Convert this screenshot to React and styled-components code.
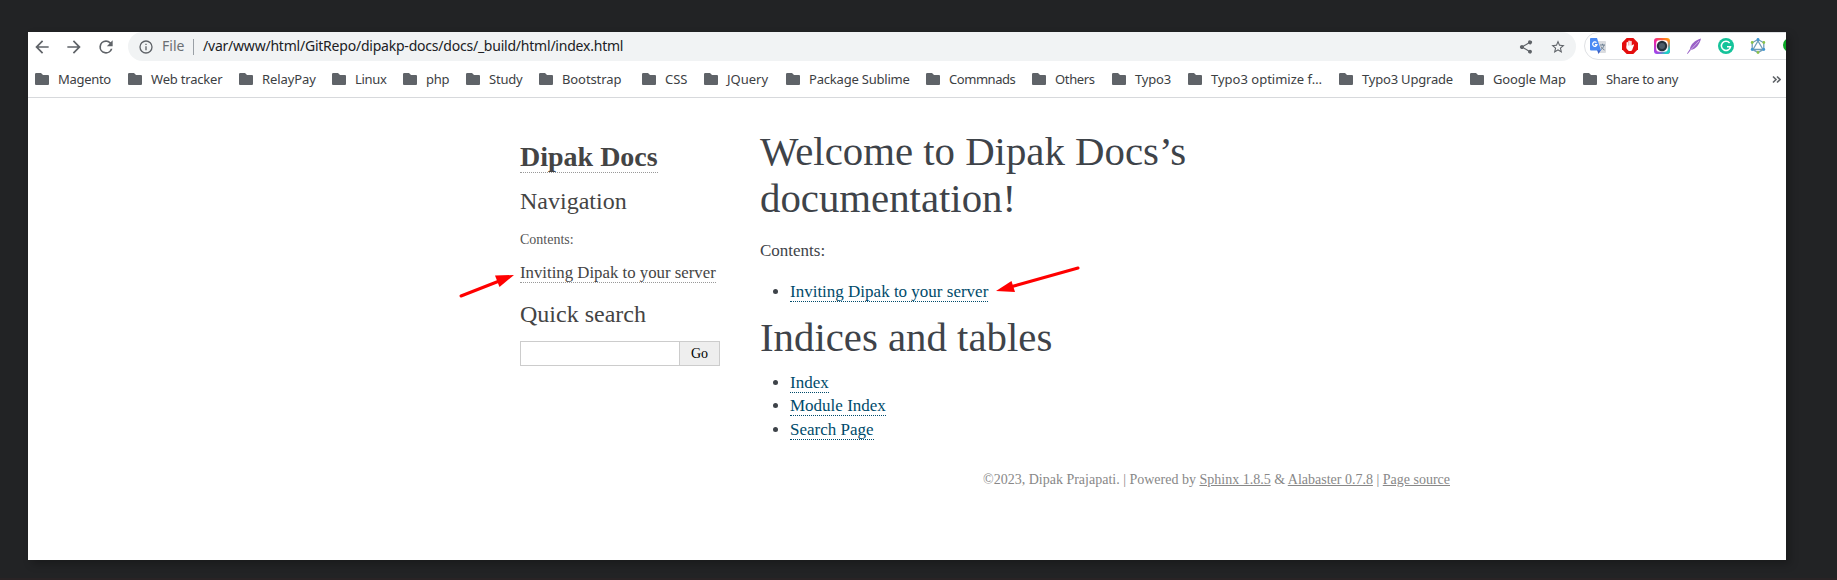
import React from 'react';
import styled, { createGlobalStyle } from 'styled-components';

const Global = createGlobalStyle`
  * { box-sizing: border-box; }
  html, body { margin: 0; background: #222325; }
  body { font-family: "Liberation Serif", serif; overflow: hidden; }
`;

const Desktop = styled.div`
  height: 580px;
  padding: 32px 51px 20px 28px;
  background: #222325;
  border-bottom: 2px solid #292325;
`;
const Window = styled.div`
  width: 1758px;
  height: 528px;
  background: #fff;
  overflow: hidden;
  box-shadow: 4px 4px 8px rgba(0, 0, 0, 0.25);
`;
const Chrome = styled.header`
  height: 66px;
  border-bottom: 1px solid #d7d9dc;
  font-family: "Noto Sans", sans-serif;
`;
const Toolbar = styled.div`
  display: flex;
  height: 29px;
  align-items: center;
`;
const NavButtons = styled.div`
  display: flex;
  flex: none;
  gap: 12px;
  width: 100px;
  padding-left: 4px;
`;
const Icon = styled.svg`
  display: block;
  flex: none;
  width: ${(p) => p.$size}px;
  height: ${(p) => p.$size}px;
  fill: ${(p) => p.$color || '#5f6368'};
`;
const AddressBar = styled.div`
  display: flex;
  flex: none;
  align-items: center;
  width: 1448px;
  height: 29px;
  padding: 0 10px 0 10px;
  border-radius: 14.5px;
  background: #f1f3f4;
  font-size: 14px;
  line-height: 18px;
  color: #202124;
`;
const Scheme = styled.span`
  width: 31px;
  margin: -1px 0 0 8px;
  color: #6b6f73;
`;
const Divider = styled.span`
  width: 1px;
  height: 16px;
  margin-right: 9px;
  background: #9aa0a6;
`;
const Path = styled.span`
  flex: 1;
  margin-top: -1px;
  letter-spacing: ${(p) => p.$spacing}px;
  white-space: nowrap;
`;
const AddressActions = styled.div`
  display: flex;
  gap: 16px;
`;
const Extensions = styled.div`
  display: flex;
  flex: none;
  align-items: center;
  gap: 16px;
  width: 250px;
  height: 28px;
  margin: 0 0 1px 8px;
  padding-left: 5px;
  border: 1px solid #dfe1e4;
  border-radius: 14px;
`;
const BookmarkBar = styled.nav`
  display: flex;
  height: 36px;
  padding: 0 5px 0 7px;
  align-items: center;
  font-size: 13px;
  color: #3c4043;
`;
const Bookmark = styled.div`
  display: flex;
  flex: none;
  align-items: center;
  gap: 9px;
  width: ${(p) => p.$width}px;
  letter-spacing: ${(p) => p.$spacing}px;
  white-space: nowrap;
`;
const Overflow = styled.span`
  margin-left: auto;
`;

const Page = styled.div`
  width: 940px;
  margin-left: 482px;
`;
const Document = styled.div`
  display: flex;
  padding-top: 30px;
`;
const Sidebar = styled.aside`
  width: 220px;
  padding: 13px 10px 0;
  color: #555;
  font-size: 14px;
  line-height: 20px;
`;
const Logo = styled.h1`
  margin: 0;
  font-size: 28px;
  line-height: 32px;
  color: #444;
`;
const SideLink = styled.a`
  border-bottom: 1px dotted #999;
  color: #444;
`;
const SideHeading = styled.h3`
  margin: ${(p) => p.$top}px 0 0;
  font-size: 24px;
  font-weight: 400;
  line-height: 28px;
  color: #444;
`;
const SideCaption = styled.p`
  margin: 15px 0 0;
`;
const SideItem = styled.div`
  margin-top: 11px;
  font-size: 16.8px;
  line-height: 24px;
`;
const Search = styled.div`
  display: flex;
  width: 200px;
  height: 25px;
  margin-top: 13px;
`;
const SearchInput = styled.input`
  width: 160px;
  border: 1px solid #ccc;
  background: #fff;
  border-radius: 0;
  outline: none;
`;
const SearchButton = styled.button`
  width: 41px;
  margin-left: -1px;
  padding: 0;
  border: 1px solid #ccc;
  background: #eee;
  color: #000;
  font: 14px "Liberation Serif", serif;
`;
const Body = styled.main`
  width: 720px;
  padding: 0 30px;
  font-size: 17px;
  line-height: 23.8px;
  color: #3e4349;
`;
const Title = styled.h1`
  margin: 0;
  font-size: 40.8px;
  font-weight: 400;
  line-height: 47px;
`;
const Text = styled.p`
  margin: 17px 0;
`;
const List = styled.ul`
  margin: 10px 0 ${(p) => p.$bottom || 0}px 30px;
  padding: 0;
`;
const Link = styled.a`
  border-bottom: 1px dotted #004b6b;
  color: #004b6b;
`;
const Footer = styled.footer`
  margin-top: 28px;
  text-align: right;
  font-size: 14px;
  line-height: 20px;
  color: #888;
`;
const FooterLink = styled.a`
  text-decoration: underline;
`;
const Arrow = styled.svg`
  position: absolute;
  left: ${(p) => p.$x}px;
  top: ${(p) => p.$y}px;
  fill: #f00;
  stroke: #f00;
`;

const bookmarks = [
  ['Magento', 93, -0.3], ['Web tracker', 111, -0.2], ['RelayPay', 93, -0.1], ['Linux', 71, -0.3],
  ['php', 63, -0.3], ['Study', 73, -0.2], ['Bootstrap', 103, -0.1], ['CSS', 62, 0], ['JQuery', 82, 0],
  ['Package Sublime', 140, -0.2], ['Commnads', 106, -0.45], ['Others', 80, -0.35], ['Typo3', 76, -0.2],
  ['Typo3 optimize f…', 151, 0], ['Typo3 Upgrade', 131, -0.2], ['Google Map', 113, -0.15],
  ['Share to any', 110, -0.35],
];

const Folder = () => (
  <Icon $size={14} viewBox="0 0 14 14">
    <path d="M1.200 1H6l2 2h5A1 1 0 0 1 14 4v8A1 1 0 0 1 13 13H1A1 1 0 0 1 0 12V2.200A1.200 1.200 0 0 1 1.200 1z" />
  </Icon>
);

export default function App() {
  return (
    <Desktop>
      <Global />
      <Window>
        <Chrome>
          <Toolbar>
            <NavButtons>
              <Icon $size={20} viewBox="0 0 24 24"><path d="M20 11H7.830l5.590-5.590L12 4l-8 8 8 8 1.410-1.410L7.830 13H20v-2z" /></Icon>
              <Icon $size={20} viewBox="0 0 24 24"><path d="M12 4l-1.410 1.410L16.170 11H4v2h12.170l-5.580 5.590L12 20l8-8z" /></Icon>
              <Icon $size={20} viewBox="0 0 24 24"><path d="M17.650 6.350A7.960 7.960 0 0 0 12 4a8 8 0 1 0 7.730 10h-2.080A6 6 0 1 1 12 6c1.660 0 3.140.69 4.220 1.780L13 11h7V4l-2.350 2.350z" /></Icon>
            </NavButtons>
            <AddressBar>
              <Icon $size={16} viewBox="0 0 24 24"><path d="M11 7h2v2h-2zm0 4h2v6h-2zm1-9a10 10 0 1 0 0 20 10 10 0 0 0 0-20zm0 18a8 8 0 1 1 0-16 8 8 0 0 1 0 16z" /></Icon>
              <Scheme>File</Scheme>
              <Divider />
              <Path $spacing={-0.22}>/var/www/html/GitRepo/dipakp-docs/docs/_build/html/index.html</Path>
              <AddressActions>
                <Icon $size={16} viewBox="0 0 24 24"><path d="M18 16.080c-.76 0-1.440.3-1.960.77L8.910 12.700a3.300 3.300 0 0 0 0-1.400l7.050-4.110A3 3 0 1 0 15 5c0 .24.04.47.09.7L8.040 9.810a3 3 0 1 0 0 4.380l7.120 4.160a2.920 2.920 0 1 0 2.840-2.270z" /></Icon>
                <Icon $size={16} viewBox="0 0 24 24"><path d="M22 9.240l-7.190-.62L12 2 9.190 8.630 2 9.240l5.460 4.730L5.820 21 12 17.270 18.180 21l-1.630-7.030L22 9.240zM12 15.400l-3.760 2.270 1-4.280-3.320-2.880 4.380-.38L12 6.100l1.710 4.040 4.380.38-3.320 2.880 1 4.280L12 15.400z" /></Icon>
              </AddressActions>
            </AddressBar>
            <Extensions>
              <Icon $size={16} viewBox="0 0 16 16">
                <path fill="#dadce0" d="M6 3h9a1 1 0 0 1 1 1v10a1 1 0 0 1-1 1H9z" />
                <path fill="#3b5fc4" d="M7 12h4l-2.500 4z" />
                <path fill="#4a8af4" d="M1 0h6l4 12.500H1a1 1 0 0 1-1-1V1a1 1 0 0 1 1-1z" />
                <path fill="none" stroke="#fff" strokeWidth="1.200" d="M6.500 4.700A2.200 2.200 0 1 0 7 6.700H5" />
                <path fill="none" stroke="#6b7f92" d="M10 7h5M12.500 5.800V7M14 7c-.3 2-1.500 3.500-3 4.500M11 8.500c.7 1.500 2 2.700 3.500 3.500" />
              </Icon>
              <Icon $size={16} viewBox="0 0 16 16">
                <path fill="#e40d0d" d="M4.700 0h6.600L16 4.700v6.600L11.300 16H4.700L0 11.300V4.700z" />
                <path fill="none" stroke="#fff" strokeWidth="1.500" strokeLinecap="round" d="M5.300 4.800v5M7.100 3.300v5M8.900 3.500v5" />
                <path fill="#fff" d="M4.550 7.500h5.200l1.700-1.200.6.7-2 5.200-1 .8H6.800l-2.200-2.300z" />
              </Icon>
              <Icon $size={16} viewBox="0 0 16 16">
                <defs>
                  <linearGradient id="ring" x1="1" y1="0" x2="0" y2="1"><stop offset="0" stopColor="#ffb400" /><stop offset=".3" stopColor="#ff5a3c" /><stop offset=".55" stopColor="#f0249c" /><stop offset="1" stopColor="#8a4dff" /></linearGradient>
                  <linearGradient id="glow" x1="0" y1="0" x2="1" y2="1"><stop offset=".55" stopColor="#19c6e8" stopOpacity="0" /><stop offset=".85" stopColor="#19d6c8" /></linearGradient>
                </defs>
                <rect width="16" height="16" rx="3" fill="url(#ring)" />
                <rect width="16" height="16" rx="3" fill="url(#glow)" />
                <rect x="2.200" y="2.200" width="11.600" height="11.600" rx="3" fill="#fff" />
                <circle cx="8" cy="8" r="5.200" fill="#26323c" /><circle cx="8" cy="8" r="3" fill="#4c5c69" />
              </Icon>
              <Icon $size={16} viewBox="0 0 16 16">
                <path fill="#9a62c7" d="M15 .5C9 2 4.500 6.500 4 11L1 15.500l.6.500 3.200-4C10 11 13.500 6.500 15 .5z" />
                <path fill="none" stroke="#dcc3ee" strokeWidth=".8" d="M13 3L4.500 12" />
              </Icon>
              <Icon $size={16} viewBox="0 0 16 16">
                <circle cx="8" cy="8" r="8" fill="#15c39a" />
                <path fill="none" stroke="#fff" strokeWidth="1.500" d="M11.600 5A4.600 4.600 0 1 0 12.500 8.800H9M12.500 8.800L11.500 11" />
              </Icon>
              <Icon $size={16} viewBox="0 0 16 16">
                <path fill="none" stroke="#6f9db8" strokeWidth="1.300" d="M8 1.500l5.800 3.300v6.500L8 14.500l-5.800-3.200V4.800zM8 3L3 11.500h10z" />
                <g fill="#8bc34a"><circle cx="2.200" cy="4.500" r="1.400" /><circle cx="13.800" cy="4.500" r="1.400" /><circle cx="8" cy="14.500" r="1.400" /></g>
                <g fill="#3f97d3"><circle cx="8" cy="1.500" r="1.400" /><circle cx="2.200" cy="11.500" r="1.400" /><circle cx="13.800" cy="11.500" r="1.400" /></g>
              </Icon>
              <Icon $size={16} viewBox="0 0 16 16"><circle cx="8" cy="7" r="7" fill="#0aa825" /></Icon>
            </Extensions>
          </Toolbar>
          <BookmarkBar>
            {bookmarks.map(([name, width, spacing]) => (
              <Bookmark key={name} $width={width} $spacing={spacing}><Folder /><span>{name}</span></Bookmark>
            ))}
            <Overflow>
              <Icon $size={9} viewBox="0 0 9 9"><path fill="none" stroke="#5f6368" strokeWidth="1.600" d="M1 1.500l3 3-3 3M5 1.500l3 3-3 3" /></Icon>
            </Overflow>
          </BookmarkBar>
        </Chrome>
        <Page>
          <Document>
            <Sidebar>
              <Logo><SideLink>Dipak Docs</SideLink></Logo>
              <SideHeading $top={14}>Navigation</SideHeading>
              <SideCaption>Contents:</SideCaption>
              <SideItem><SideLink>Inviting Dipak to your server</SideLink></SideItem>
              <SideHeading $top={15}>Quick search</SideHeading>
              <Search>
                <SearchInput aria-label="Search" />
                <SearchButton>Go</SearchButton>
              </Search>
            </Sidebar>
            <Body>
              <Title>Welcome to Dipak Docs’s documentation!</Title>
              <Text>Contents:</Text>
              <List $bottom={10}><li><Link>Inviting Dipak to your server</Link></li></List>
              <Title>Indices and tables</Title>
              <List>
                <li><Link>Index</Link></li>
                <li><Link>Module Index</Link></li>
                <li><Link>Search Page</Link></li>
              </List>
            </Body>
          </Document>
          <Footer>
            ©2023, Dipak Prajapati. | Powered by <FooterLink>Sphinx 1.8.5</FooterLink> &amp; <FooterLink>Alabaster 0.7.8</FooterLink> | <FooterLink>Page source</FooterLink>
          </Footer>
        </Page>
      </Window>
      <Arrow $x={456} $y={270} width="62" height="30">
        <path strokeWidth="3" strokeLinecap="round" d="M5 26L42 11.500" />
        <path stroke="none" d="M58 5L39 5.500L43.500 17z" />
      </Arrow>
      <Arrow $x={992} $y={262} width="92" height="34">
        <path strokeWidth="3" strokeLinecap="round" d="M86 6L20 24.500" />
        <path stroke="none" d="M4 29L19.500 19L23 30z" />
      </Arrow>
    </Desktop>
  );
}
